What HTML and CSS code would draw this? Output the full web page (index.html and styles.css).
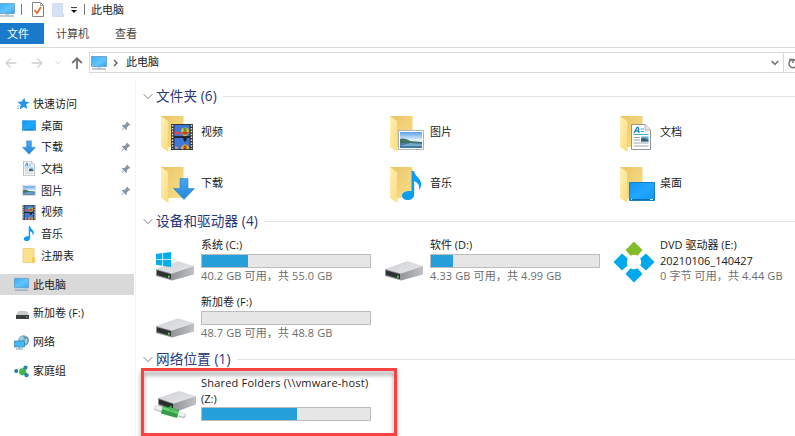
FILE: index.html
```html
<!DOCTYPE html>
<html lang="zh-CN">
<head>
<meta charset="utf-8">
<title>此电脑</title>
<link rel="stylesheet" href="styles.css">
</head>
<body>
<svg class="defs" aria-hidden="true">
  <defs>
    <linearGradient id="gBack" x1="0" y1="0" x2="1" y2="1"><stop offset="0" stop-color="#e9c467"/><stop offset="1" stop-color="#fbe08b"/></linearGradient>
    <linearGradient id="gFront" x1="0" y1="0" x2="1" y2="1"><stop offset="0" stop-color="#fff0b5"/><stop offset="1" stop-color="#fbdc7e"/></linearGradient>
    <linearGradient id="gScreen" x1="0" y1="0" x2="1" y2="1"><stop offset="0" stop-color="#37aef8"/><stop offset=".55" stop-color="#62c5ff"/><stop offset="1" stop-color="#2fa5f3"/></linearGradient>
    <linearGradient id="gDesk" x1="0" y1="0" x2="1" y2="1"><stop offset="0" stop-color="#1494f0"/><stop offset=".5" stop-color="#20a7ff"/><stop offset="1" stop-color="#1297f5"/></linearGradient>
    <linearGradient id="gArrow" x1="0" y1="0" x2="0" y2="1"><stop offset="0" stop-color="#48a5ee"/><stop offset="1" stop-color="#2788dc"/></linearGradient>
    <linearGradient id="gSide" x1="0" y1="0" x2="1" y2="0"><stop offset="0" stop-color="#929599"/><stop offset="1" stop-color="#c0c2c5"/></linearGradient>
    <linearGradient id="gTop" x1="0" y1="0" x2="1" y2="1"><stop offset="0" stop-color="#cfd1d4"/><stop offset="1" stop-color="#e6e7e9"/></linearGradient>
    <linearGradient id="gSky" x1="0" y1="0" x2="0" y2="1"><stop offset="0" stop-color="#5a9eea"/><stop offset=".5" stop-color="#e2f2fb"/></linearGradient>
  </defs>
  <symbol id="pc" viewBox="0 0 16 16">
    <path d="M.5 1.500h15v10H.5z" fill="url(#gScreen)" stroke="#6198c2" stroke-width=".8"/>
    <path d="M6 12h4v1.500H6z" fill="#b9d8ea"/><path d="M1 14h14" stroke="#7798b3" stroke-width="1"/>
  </symbol>
  <symbol id="folder" viewBox="0 0 36 38">
    <path d="M1 1h22.500v31H3z" fill="url(#gBack)"/>
    <path d="M1 1l7.500 5.500V37L1 32z" fill="url(#gFront)"/><path d="M8.500 6.500v26" stroke="#eccb6e" stroke-width=".5"/>
  </symbol>
  <symbol id="film" viewBox="0 0 22 26">
    <path d="M0 0h22v26H0z" fill="#353638"/><path d="M3.500 1h15v11.500h-15zM3.500 13.500h15V25h-15z" fill="#3f77d6"/>
    <path d="M1.500 1v24M20.500 1v24" stroke="#e4e5e7" stroke-width="1.500" stroke-dasharray="1.500 1.400"/>
    <path d="M3.500 10.500V7l4 1 4 2.500z" fill="#d44b50"/>
    <path d="M10 7.500a4 4 0 0 1 8 0c0 2-3 5-4 5s-4-3-4-5z" fill="#e9b928"/><path d="M12.500 3.600h3v7h-3z" fill="#4b9b47"/><path d="M10 8h8l-2 2.500h-4z" fill="#c84032"/>
    <path d="M3 13h16" stroke="#1c1d20" stroke-width="1.600"/><path d="M12 13.500h4v1l-1 3h-2z" fill="#222"/><path d="M10 25c0-6 8-6 8 0z" fill="#f0ba23"/><path d="M12.500 21.500h3V25h-3z" fill="#a44526"/><path d="M4 22l3 1v2H4z" fill="#d38787"/>
  </symbol>
  <symbol id="down" viewBox="0 0 22 22"><path d="M7 .5h8v10h6.500L11 21.500.5 10.500H7z" fill="url(#gArrow)" stroke="#2d83ce" stroke-width=".6"/></symbol>
  <symbol id="note" viewBox="0 0 20 29"><path d="M9.500 0h2.500c.5 5 7 7 7.200 13-.1 3-1.200 5-2.200 6 1-5-1-7-4.800-9v13c0 4-3 6-6.500 6S0 27 0 24.500s3-5 9.500-4.500z" fill="#0c9df0"/></symbol>
  <symbol id="photo" viewBox="0 0 26 20"><path d="M.5.5h25v19H.5z" fill="#fff" stroke="#aeb3b7"/><path d="M2 2h22v16H2z" fill="url(#gSky)"/><path d="M2 9c4-1 7 0 10 2l12 1v2H2z" fill="#3f7560"/><path d="M2 13h22v5H2z" fill="#427ba8"/><path d="M2 16l10-3 12 1v2z" fill="#79a9c5"/></symbol>
  <symbol id="doc" viewBox="0 0 20 26"><path d="M.5.5h13.500l5.500 5.500v19.500H.5z" fill="#fff" stroke="#8e9397"/><path d="M14 .5V6h5.500" fill="#e6e9eb" stroke="#9da2a6" stroke-width=".8"/><path d="M3 9l3-5.500h1.200L8 9M4.500 7H8" fill="none" stroke="#2486c5" stroke-width="1.400"/><path d="M9.500 5H13M9.500 7.500H13M2.500 10.500h15" stroke="#45a8d3" stroke-width="1.200"/><path d="M2.500 13.500h6.500M2.500 16h6.500M2.500 19h15M2.500 22h15" stroke="#9ca6ab"/><path d="M10 12.500h7.500v5H10z" fill="#62a8d5"/><path d="M10 15l3-1 4.500 2v1.500H10z" fill="#345f6d"/></symbol>
  <symbol id="desk" viewBox="0 0 26 19"><path d="M.5.5h25v18H.5z" fill="url(#gDesk)" stroke="#167fc5"/><path d="M1 17.500h24" stroke="#0e6cb0"/><path d="M2 17.500h1M21 17.500h3" stroke="#d9f1ff"/></symbol>
  <symbol id="drive" viewBox="0 0 40 21">
    <path d="M1 9L23 1.200 39 6 17 13.500z" fill="url(#gTop)"/><path d="M17 13.500L39 6v8.500L17 20.500z" fill="url(#gSide)"/>
    <path d="M1 9l16 4.500v7L1 16z" fill="#929598"/><path d="M2 10.300l14 4v4.800l-14-4z" fill="#2e3132"/><path d="M13 15.500l1.700.4v1.900l-1.700-.4z" fill="#4ff04c"/>
  </symbol>
  <symbol id="win" viewBox="0 0 15 15"><path d="M0 2l6.300-.9V7H0zM7.100 1L15 0v7H7.100zM0 7.800h6.300v5.900L0 12.800zM7.100 7.800H15V15l-7.900-1.100z" fill="#00adef"/></symbol>
  <symbol id="dvd" viewBox="0 0 42 42">
    <path d="M21 .5L29.500 9l-5 5.800a7 7 0 0 0-7 0L12.500 9z" fill="#82bc26"/>
    <g fill="#00a8ec"><path d="M9 12.500l5.800 5a7 7 0 0 0 0 7L9 29.500.5 21z"/><path d="M33 12.500L41.500 21 33 29.500l-5.800-5a7 7 0 0 0 0-7z"/><path d="M17.500 27.200a7 7 0 0 0 7 0l5 5.800-8.500 8.500-8.500-8.500z"/></g>
  </symbol>
  <symbol id="pin" viewBox="0 0 10 10"><path d="M6 .6L9.400 4l-1 .6-.7-.1-1.800 2 .1 1.700-.8.700-2-2-2.500 2.500-.4-.4L2.800 6.500l-2-2 .8-.7 1.800.1 2-1.800-.1-.7z" fill="#8796a5"/></symbol>
  <symbol id="star" viewBox="0 0 14 14"><path d="M8.300.7l1.200 4 4 .4-3.300 2.500 1 4.200-3.700-1.900-3.900 2.500 1.100-4.600L1.500 4.800l4.300-.2z" fill="#2495e8"/><path d="M1 9.500l2.500-1M1 12l2-1" stroke="#7cbef0"/></symbol>
  <symbol id="smallfolder" viewBox="0 0 13 15"><path d="M.5.5h11V12l1 .5v2H.5z" fill="#fde28c" stroke="#e6c666" stroke-width=".7"/><path d="M9.500 14.500V9h3v5.500z" fill="#f2cc58"/></symbol>
  <symbol id="net" viewBox="0 0 15 15"><circle cx="9.500" cy="5.500" r="5.200" fill="#5c9fc0"/><path d="M6 2l3-1 1 3-2 2-3-1zM10 5l3-2 1.500 3-2 4z" fill="#a5cbd9"/><path d="M13 2c2 3 1 6-1 8" stroke="#467f9e" fill="none"/><path d="M.5 6h10v6H.5z" fill="#41b8fa" stroke="#3f8cb9" stroke-width=".8"/><path d="M5.500 12.500V14M2 14h7" stroke="#789fb5" fill="none"/></symbol>
  <symbol id="home" viewBox="0 0 15 12"><circle cx="2.200" cy="5.500" r="2" fill="#2179b4"/><path d="M5 6l5-4 3 7-5 1z" fill="#47b84b"/><circle cx="8.500" cy="6.200" r="3.400" fill="#43b749"/><circle cx="11.500" cy="2.200" r="2.100" fill="#2784b5"/><circle cx="12.500" cy="9.600" r="2.200" fill="#2784b5"/></symbol>
  <symbol id="chev" viewBox="0 0 10 7"><path d="M.7 1.200L5 5.700l4.300-4.500" fill="none" stroke="currentColor"/></symbol>
  <symbol id="netdrive" viewBox="0 0 44 30">
    <path d="M4 8L25 1l17 5-22 7.500z" fill="url(#gTop)"/><path d="M20 13.500L42 6v8.500l-22 8z" fill="url(#gSide)"/><path d="M4 8l16 5.500v8L4 15z" fill="#8e9194"/><path d="M5 9.200l14 4.800v5L5 14z" fill="#292c2d"/><path d="M16 15.500l1.500.5v1.700l-1.500-.5z" fill="#4ae64a"/>
    <path d="M3 18.200L29 25.500" stroke="#bac5c4" stroke-width="5.400" stroke-linecap="round"/><path d="M3 17.700L29 24.800" stroke="#eef2f2" stroke-width="3.500" stroke-linecap="round"/>
    <path d="M8 19.700L24 24.200" stroke="#369c46" stroke-width="8"/><path d="M8 18L24 22.500" stroke="#6bd475" stroke-width="2.400"/><path d="M15 17l6 2v3l-6-1.500z" fill="#50bd5d"/>
  </symbol>
</svg>

<header class="titlebar">
  <svg class="t-pc"><use href="#pc"/></svg><i class="sep s1"></i>
  <svg class="t-check" viewBox="0 0 12 15"><path d="M.5.5h8l3 3v11H.5z" fill="#fff" stroke="#858585"/><path d="M8.500.5v3h3" fill="none" stroke="#a5a5a5"/><path d="M2.500 8l2.500 3 4-6" fill="none" stroke="#ee641f" stroke-width="1.700"/></svg>
  <svg class="t-new" viewBox="0 0 12 14"><path d="M.5.500h10v10l1 .5v2.500H.5z" fill="#d5e1f4" stroke="#c6d3e8" stroke-width=".7"/></svg>
  <svg class="t-menu" viewBox="0 0 6 7"><path d="M0 .6h6" stroke="#333"/><path d="M0 3h6L3 6z" fill="#111"/></svg>
  <i class="sep s2"></i><span class="title">此电脑</span>
</header>
<nav class="tabs"><span class="tab file">文件</span><span class="tab computer">计算机</span><span class="tab view">查看</span></nav>
<div class="address">
  <div class="history">
    <svg class="arrow" viewBox="0 0 12 12"><path d="M11.500 6H1M5.500 1.500L1 6l4.500 4.500" fill="none" stroke="#d1d1d1" stroke-width="1.300"/></svg>
    <svg class="arrow fwd" viewBox="0 0 12 12"><path d="M.5 6H11M6.500 1.500L11 6l-4.500 4.500" fill="none" stroke="#d1d1d1" stroke-width="1.300"/></svg>
    <svg class="recent"><use href="#chev"/></svg>
    <svg class="up" viewBox="0 0 12 12"><path d="M6 12V1.500M1.200 6L6 1.300 10.800 6" fill="none" stroke="#707070" stroke-width="1.800"/></svg>
  </div>
  <div class="path"><svg class="a-pc"><use href="#pc"/></svg><svg class="crumb" viewBox="0 0 5 8"><path d="M1 1l3 3-3 3" fill="none" stroke="#555" stroke-width="1.300"/></svg><span>此电脑</span><svg class="drop" viewBox="0 0 8 6"><path d="M.7 1L4 4.300 7.300 1" fill="none" stroke="#777" stroke-width="1.700"/></svg></div>
  <div class="refresh"><svg viewBox="0 0 7 11"><path d="M7.500 2.500A4 4 0 1 0 9 6M1 1.500h4v3.500" fill="none" stroke="#777" stroke-width="1.500"/></svg></div>
</div>

<div class="body">
  <aside>
    <div class="root"><svg class="i-star"><use href="#star"/></svg>快速访问</div>
    <div class="sub"><svg class="i-desk"><use href="#desk"/></svg>桌面<svg class="pin"><use href="#pin"/></svg></div>
    <div class="sub"><svg><use href="#down"/></svg>下载<svg class="pin"><use href="#pin"/></svg></div>
    <div class="sub"><svg><use href="#doc"/></svg>文档<svg class="pin"><use href="#pin"/></svg></div>
    <div class="sub"><svg class="i-photo"><use href="#photo"/></svg>图片<svg class="pin"><use href="#pin"/></svg></div>
    <div class="sub"><svg><use href="#film"/></svg>视频</div>
    <div class="sub"><svg><use href="#note"/></svg>音乐</div>
    <div class="sub"><svg><use href="#smallfolder"/></svg>注册表</div>
    <div class="root gap selected"><svg><use href="#pc"/></svg>此电脑</div>
    <div class="root gap"><svg class="i-drive" viewBox="0 0 13 8"><path d="M2.500 0h8L13 4H0z" fill="#c7c9ca"/><path d="M0 4h13v4H0z" fill="#3b3f3f"/><path d="M10 6h1.500" stroke="#45e755"/></svg>新加卷 (F:)</div>
    <div class="root gap"><svg><use href="#net"/></svg>网络</div>
    <div class="root gap"><svg><use href="#home"/></svg>家庭组</div>
  </aside>
  <main>
    <h2><svg><use href="#chev"/></svg><span>文件夹 (6)</span></h2>
    <section class="grid folders">
      <div class="tile"><div class="ficon"><svg class="fbase"><use href="#folder"/></svg><svg class="o-film"><use href="#film"/></svg></div>视频</div>
      <div class="tile"><div class="ficon"><svg class="fbase"><use href="#folder"/></svg><svg class="o-photo"><use href="#photo"/></svg></div>图片</div>
      <div class="tile"><div class="ficon"><svg class="fbase"><use href="#folder"/></svg><svg class="o-doc"><use href="#doc"/></svg></div>文档</div>
      <div class="tile"><div class="ficon"><svg class="fbase"><use href="#folder"/></svg><svg class="o-down"><use href="#down"/></svg></div>下载</div>
      <div class="tile"><div class="ficon"><svg class="fbase"><use href="#folder"/></svg><svg class="o-note"><use href="#note"/></svg></div>音乐</div>
      <div class="tile"><div class="ficon"><svg class="fbase"><use href="#folder"/></svg><svg class="o-desk"><use href="#desk"/></svg></div>桌面</div>
    </section>
    <h2><svg><use href="#chev"/></svg><span>设备和驱动器 (4)</span></h2>
    <section class="grid drives">
      <div class="drive"><div class="dicon"><svg class="o-win"><use href="#win"/></svg><svg class="disk"><use href="#drive"/></svg></div><div class="info"><p>系统 (C:)</p><div class="bar"><b style="width:27.5%"></b></div><p class="free">40.2 GB 可用<span class="comma">，</span>共 55.0 GB</p></div></div>
      <div class="drive"><div class="dicon"><svg class="disk"><use href="#drive"/></svg></div><div class="info"><p>软件 (D:)</p><div class="bar"><b style="width:13%"></b></div><p class="free">4.33 GB 可用<span class="comma">，</span>共 4.99 GB</p></div></div>
      <div class="drive"><div class="dicon"><svg class="disc"><use href="#dvd"/></svg></div><div class="info dvd"><p>DVD 驱动器 (E:)</p><p>20210106_140427</p><p class="free">0 字节 可用<span class="comma">，</span>共 4.44 GB</p></div></div>
      <div class="drive"><div class="dicon"><svg class="disk"><use href="#drive"/></svg></div><div class="info"><p>新加卷 (F:)</p><div class="bar"></div><p class="free">48.7 GB 可用<span class="comma">，</span>共 48.8 GB</p></div></div>
    </section>
    <h2><svg><use href="#chev"/></svg><span>网络位置 (1)</span></h2>
    <section class="share"><div class="dicon"><svg class="netdisk"><use href="#netdrive"/></svg></div><div class="info"><p class="sharename">Shared Folders (\\vmware-host)</p><p>(Z:)</p><div class="bar"><b style="width:56.5%"></b></div></div></section>
  </main>
</div>
<div class="highlight"></div>
</body>
</html>
```
FILE: styles.css
```css
* { box-sizing: border-box; }
html, body { margin: 0; width: 795px; height: 436px; overflow: hidden; background: #fff; }
body { font: 11px/16px "Open Sans", "Noto Sans CJK SC", sans-serif; color: #1a1a1a; white-space: nowrap; position: relative; }
svg { display: block; flex: none; }
p, h2 { margin: 0; font-weight: normal; }
.defs { position: absolute; width: 0; height: 0; }

.titlebar { height: 23px; display: flex; align-items: center; padding-bottom: 4px; }
.t-pc { width: 16px; height: 16px; margin-left: -1px; }
.sep { width: 1px; height: 11px; background: #777; }
.s1 { margin-left: 6px; }
.t-check { width: 12px; height: 15px; margin-left: 10px; }
.t-new { width: 12px; height: 14px; margin-left: 8px; }
.t-menu { width: 6px; height: 7px; margin: 2px 0 0 7px; }
.s2 { margin-left: 7px; }
.title { margin-left: 6px; }

.tabs { height: 25px; border-bottom: 1px solid #dadbdc; display: flex; }
.tab { height: 21px; line-height: 22px; color: #444; }
.file { width: 44px; padding-left: 7px; background: #1979ca; color: #fff; }
.computer { margin-left: 12px; }
.view { margin-left: 26px; }

.address { height: 32px; display: flex; padding-top: 4px; }
.history { width: 89px; height: 21px; display: flex; align-items: center; padding-left: 5px; }
.arrow { width: 12px; height: 12px; }
.fwd { margin-left: 14px; }
.recent { width: 6px; height: 5px; margin-left: 12px; color: #bbb; }
.up { width: 12px; height: 12px; margin-left: 10px; }
.path { width: 695px; height: 21px; border: 1px solid #d9d9d9; display: flex; align-items: center; padding-left: 1px; }
.path span { padding-bottom: 2px; }
.a-pc { width: 16px; height: 16px; }
.crumb { width: 5px; height: 8px; margin: 0 8px 0 6px; }
.drop { width: 8px; height: 6px; margin: 1px 4px 0 auto; }
.refresh { width: 11px; height: 21px; border: solid #d9d9d9; border-width: 1px 0; padding: 5px 0 0 4px; }
.refresh svg { width: 7px; height: 11px; }

.body { display: flex; height: 356px; }
aside { width: 136px; padding-top: 13px; border-right: 1px solid #f5f5f5; }
.root, .sub { display: flex; align-items: center; height: 21.7px; padding-left: 14px; gap: 4px; width: 134px; }
.sub { padding-left: 22px; gap: 5px; }
.root svg { width: 15px; height: 15px; }
.sub svg { width: 14px; height: 15px; }
.root .i-star { width: 14px; height: 14px; margin-left: 2px; margin-right: -1px; }
.root .i-drive { width: 13px; height: 8px; margin: 4px 0 0 2px; }
.sub .i-desk { height: 11px; }
.sub .i-photo { height: 11px; }
.sub .pin { width: 10px; height: 10px; margin: 0 3px 0 auto; }
.gap { margin-top: 7.200px; }
.selected { background: #d9d9d9; }

main { width: 659px; padding-top: 7px; }
h2 { display: flex; align-items: center; height: 18px; font-size: 13.600px; line-height: 18px; letter-spacing: .1px; color: #26377c; padding-left: 7px; }
h2 svg { width: 10px; height: 7px; color: #808080; margin-right: 3px; }
h2::after { content: ""; height: 1px; flex: 1; background: #e3e3e3; margin-left: 6px; }
.grid { display: grid; grid-template-columns: 229px 230px 200px; margin-left: 18px; width: 641px; }
.grid.folders { grid-auto-rows: 50.7px; padding-top: 2px; height: 107px; }
.grid > div { width: 182px; }
.grid > div:nth-child(3n+2) { width: 220px; }
.tile { display: flex; align-items: center; }
.ficon { width: 36px; height: 38px; margin: 4px 5px 0 6px; position: relative; }
.fbase { width: 36px; height: 38px; }
.o-film, .o-photo, .o-doc, .o-down, .o-note, .o-desk { position: absolute; }
.o-film { left: 11px; top: 9px; width: 22px; height: 26px; }
.o-photo { left: 9px; top: 15px; width: 26px; height: 20px; }
.o-doc { left: 12px; top: 9px; width: 20px; height: 26px; }
.o-down { left: 13px; top: 12px; width: 22px; height: 22px; }
.o-note { left: 13px; top: 5px; width: 20px; height: 29px; }
.o-desk { left: 10px; top: 16px; width: 26px; height: 19px; }

.grid.drives { grid-template-columns: 229px 230px 182px; grid-auto-rows: 57px; padding-top: 7px; height: 120px; }
.drive, .share { display: flex; }
.dicon { flex: none; width: 47px; height: 50px; position: relative; padding: 23px 0 0 1px; }
.disk { width: 40px; height: 21px; }
.o-win { position: absolute; left: 2px; top: 15px; width: 15px; height: 15px; z-index: 1; }
.disc { width: 42px; height: 42px; margin: -19px 0 0 -1px; }
.info { flex: none; width: 172px; }
.dvd { width: 130px; }
.bar { width: 170px; height: 14px; background: #e6e6e6; border: 1px solid #bcbcbc; margin-top: 1px; }
.bar b { display: block; height: 12px; background: #26a0da; }
.free { color: #6d6d6d; letter-spacing: .12px; }
.comma { font-family: "Noto Sans CJK TC", sans-serif; line-height: 1; }
.dvd p { height: 15.5px; }
.share { margin-left: 18px; padding-top: 7px; }
.share p { height: 15.5px; }
.sharename { letter-spacing: .2px; }
.share .dicon { padding: 15px 0 0 0; }
.netdisk { width: 44px; height: 30px; }
.highlight { position: absolute; left: 141px; top: 368px; width: 256px; height: 68px; border: 3px solid #fb4141; filter: drop-shadow(0 4px 2px rgba(0,0,0,.4)); }
```
